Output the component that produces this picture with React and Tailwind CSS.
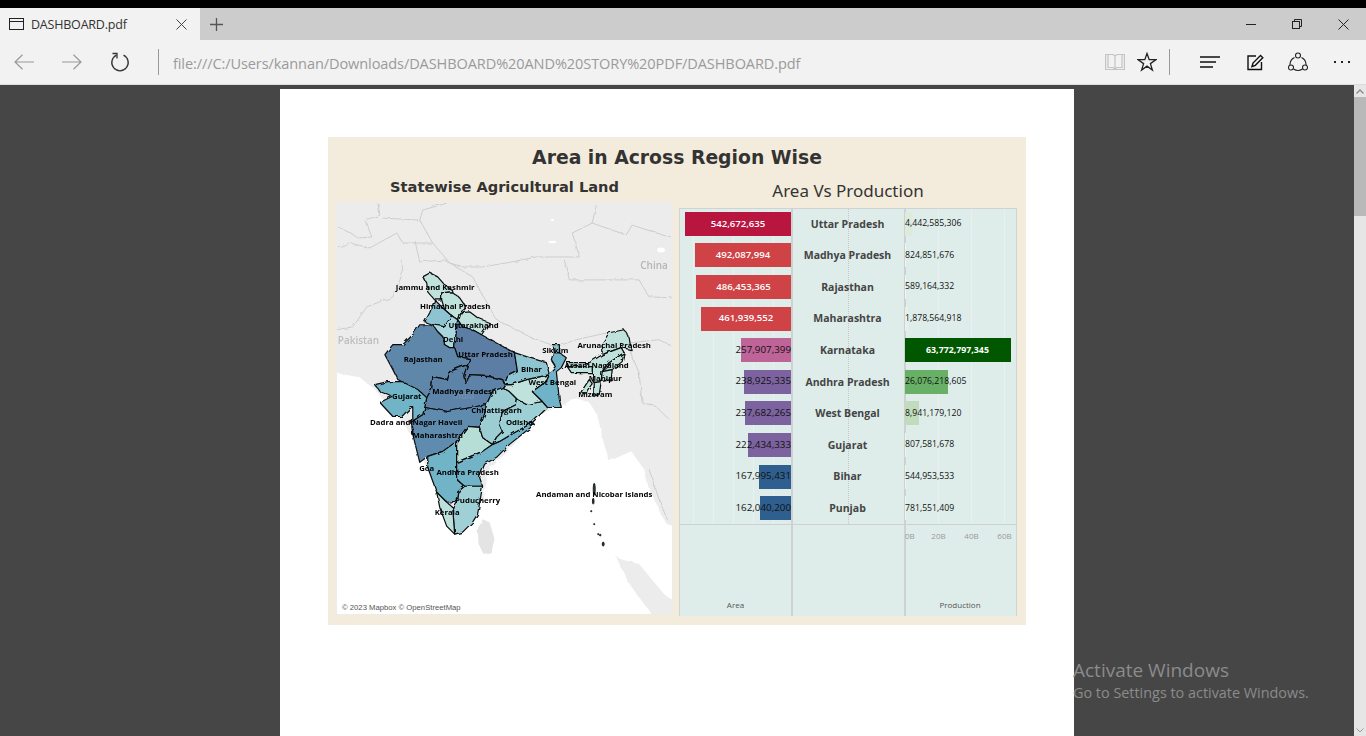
import React from 'react'

const sans = "font-['Open_Sans',sans-serif]"

const rows = [
  { name: 'Uttar Pradesh', area: '542,672,635', areaW: 106, areaBg: 'bg-[#b8163f]', areaIn: true, prod: '4,442,585,306', prodW: 7, prodBg: 'bg-[#dcebdc]' },
  { name: 'Madhya Pradesh', area: '492,087,994', areaW: 96, areaBg: 'bg-[#cf4347]', areaIn: true, prod: '824,851,676', prodW: 1, prodBg: 'bg-[#eef5ee]' },
  { name: 'Rajasthan', area: '486,453,365', areaW: 95, areaBg: 'bg-[#cf4347]', areaIn: true, prod: '589,164,332', prodW: 1, prodBg: 'bg-[#eef5ee]' },
  { name: 'Maharashtra', area: '461,939,552', areaW: 90, areaBg: 'bg-[#cf4347]', areaIn: true, prod: '1,878,564,918', prodW: 3, prodBg: 'bg-[#e8f1e8]' },
  { name: 'Karnataka', area: '257,907,399', areaW: 50, areaBg: 'bg-[#bf6498]', prod: '63,772,797,345', prodW: 106, prodBg: 'bg-[#005700]', prodIn: true },
  { name: 'Andhra Pradesh', area: '238,925,335', areaW: 47, areaBg: 'bg-[#7c63a0]', prod: '26,076,218,605', prodW: 43, prodBg: 'bg-[#67b066]' },
  { name: 'West Bengal', area: '237,682,265', areaW: 46, areaBg: 'bg-[#7c63a0]', prod: '8,941,179,120', prodW: 14, prodBg: 'bg-[#c0dcbc]' },
  { name: 'Gujarat', area: '222,434,333', areaW: 43, areaBg: 'bg-[#7c63a0]', prod: '807,581,678', prodW: 1, prodBg: 'bg-[#eef5ee]' },
  { name: 'Bihar', area: '167,995,431', areaW: 32, areaBg: 'bg-[#2f5f8f]', prod: '544,953,533', prodW: 1, prodBg: 'bg-[#eef5ee]' },
  { name: 'Punjab', area: '162,040,200', areaW: 31, areaBg: 'bg-[#2f5f8f]', prod: '781,551,409', prodW: 1, prodBg: 'bg-[#eef5ee]' },
]

const states = [
  { fill: '#bfe3dc', d: '423,277 430,273 438,277 445,285 452,290 452,292 442,293 442,300 435,300 428,292 427,283' },
  { fill: '#bfe3dc', d: '442,300 442,293 452,292 460,298 467,308 460,313 458,320 452,316 445,310' },
  { fill: '#8ec4d2', d: '435,300 445,310 452,316 445,327 433,325 425,322 430,313' },
  { fill: '#bfe3dc', d: '460,313 470,312 478,318 490,323 482,335 473,330 463,327 458,320' },
  { fill: '#a9d5dc', d: '433,325 445,327 452,316 458,320 455,348 450,348 445,345 443,337 438,332' },
  { fill: '#5c7ea5', d: '458,320 463,327 473,330 482,335 500,345 515,353 518,372 508,377 505,385 503,380 490,377 470,376 466,384 464,376 468,365 470,359 458,357 455,348' },
  { fill: '#5e87aa', d: '425,325 433,325 438,332 443,337 445,345 450,348 455,348 458,357 470,359 468,365 460,368 450,372 448,380 433,377 432,390 427,398 413,388 398,380 392,368 385,355 393,345 403,345 413,335 420,325' },
  { fill: '#5d83a9', d: '432,390 433,377 448,380 450,372 460,368 468,365 464,376 466,384 470,376 490,377 503,380 505,385 503,388 493,392 487,405 472,408 448,412 425,408 427,398' },
  { fill: '#5f8cae', d: '425,408 448,412 472,408 487,405 485,415 480,428 468,427 457,442 443,452 428,457 420,463 413,435 412,422 423,415' },
  { fill: '#72b4c7', d: '375,385 388,382 402,382 418,390 427,398 425,408 423,415 412,422 413,435 413,425 413,407 409,410 402,417 393,417 380,403 392,397 380,392' },
  { fill: '#72b4c7', d: '428,457 443,452 457,442 457,463 457,480 465,487 458,493 457,502 447,503 437,493 428,468' },
  { fill: '#b6ddd6', d: '457,442 468,427 480,428 483,438 493,445 483,452 457,463' },
  { fill: '#72b3c7', d: '457,463 483,452 493,445 500,442 517,432 533,423 535,425 510,445 497,458 485,465 480,478 483,487 465,487 457,480' },
  { fill: '#9fd0d6', d: '457,502 458,493 465,487 483,487 478,515 473,523 463,533 455,535 453,508' },
  { fill: '#bde0db', d: '437,493 447,503 453,508 455,535 447,527 440,508' },
  { fill: '#9ccdd3', d: '493,392 503,388 510,392 518,400 517,405 503,412 500,425 503,432 497,438 493,445 483,438 480,428 485,415 487,405' },
  { fill: '#9dd0d4', d: '518,400 527,405 543,402 548,408 533,423 517,432 500,442 493,445 497,438 503,432 500,425 503,412 517,405' },
  { fill: '#bfe3dc', d: '505,385 512,385 527,380 550,375 547,382 533,392 543,402 527,405 518,400 510,392 503,388' },
  { fill: '#8fc5d1', d: '515,353 530,358 547,363 550,375 527,380 512,385 505,385 508,377 518,372' },
  { fill: '#6fb3c8', d: '554,353 560,353 567,358 562,368 557,372 560,400 562,408 553,408 548,408 543,402 533,392 547,382 550,375 557,368 552,360' },
  { fill: '#8fc5d1', d: '553,345 560,345 560,353 554,353' },
  { fill: '#bfe3dc', d: '603,355 602,345 610,333 625,330 630,338 632,350 622,348' },
  { fill: '#bfe3dc', d: '568,363 590,363 603,355 622,348 625,353 610,363 603,372 602,382 595,383 593,373 593,367 568,367' },
  { fill: '#bfe3dc', d: '568,367 593,367 593,373 572,373' },
  { fill: '#bfe3dc', d: '625,353 623,362 613,370 603,372 610,363' },
  { fill: '#bfe3dc', d: '603,372 613,370 612,380 602,382' },
  { fill: '#bfe3dc', d: '595,383 602,382 600,395 595,397' },
  { fill: '#bfe3dc', d: '590,380 593,384 585,395 582,392' },
]

const islands = [[595, 490, 1, 6], [594, 502, 0.8, 3], [592, 512, 0.6, 0.6], [595, 525, 0.6, 0.6], [599, 535, 0.6, 0.6], [601, 536, 0.8, 0.8], [604, 545, 1, 2]]

const borders = [
  '338,247 350,243 370,248 397,233 403,243 433,243 450,263 463,267 483,267 507,263 537,257 563,257 580,257 573,233 593,223 597,205',
  '593,223 627,235 633,225 673,238',
  '337,226 352,234 358,238 372,237 365,220 380,215 378,203',
  '383,218 420,220 423,210 447,203',
  '420,220 433,243',
  '402,260 403,273 393,297 367,307 353,327 337,330',
  '445,260 473,277 497,320 530,337 557,347 577,340 613,332',
  '565,260 570,280 640,280 650,297 673,298',
  '632,343 660,340 673,347',
  '640,373 643,403 657,407 670,420',
  '630,350 640,373',
  '415,240 420,262 445,260',
  '650,470 660,500 668,520',
]

const labels = [
  ['Jammu and Kashmir', 435.5, 290], ['Himachal Pradesh', 455.5, 309], ['Uttarakhand', 474, 328], ['Delhi', 453.5, 342],
  ['Rajasthan', 423.5, 362], ['Uttar Pradesh', 486, 357], ['Sikkim', 556, 353], ['Arunachal Pradesh', 615, 348],
  ['Assam', 578, 368], ['Nagaland', 611, 368], ['Bihar', 532, 372], ['Manipur', 606, 381], ['West Bengal', 553, 385],
  ['Mizoram', 596, 397], ['Madhya Pradesh', 465, 394], ['Gujarat', 407, 399], ['Chhattisgarh', 497, 414],
  ['Dadra and Nagar Haveli', 416.5, 426], ['Odisha', 520, 426], ['Maharashtra', 438, 439], ['Goa', 427, 472],
  ['Andhra Pradesh', 468, 476], ['Puducherry', 478, 504], ['Kerala', 447.5, 516], ['Andaman and Nicobar Islands', 595, 498],
]

const Line = ({ children, className = 'w-5 h-5', view = '0 0 20 20', stroke = 'currentColor', width = 1 }) => (
  <svg viewBox={view} className={className} fill="none" stroke={stroke} strokeWidth={width}>{children}</svg>
)

const IndiaMap = () => (
  <svg viewBox="337 203 336 412" className="block w-full h-full">
    <defs>
      <filter id="wiggle" x="-5%" y="-5%" width="110%" height="110%">
        <feTurbulence type="fractalNoise" baseFrequency="0.14" numOctaves="2" seed="4" result="n" />
        <feDisplacementMap in="SourceGraphic" in2="n" scale="4" />
        <feGaussianBlur stdDeviation="0.25" />
      </filter>
      <filter id="soft" x="-5%" y="-5%" width="110%" height="110%">
        <feGaussianBlur stdDeviation="0.2" />
      </filter>
    </defs>
    <rect x="337" y="203" width="336" height="412" fill="#ffffff" />
    <g filter="url(#wiggle)">
      <polygon fill="#ececec" points="330,196 680,196 680,530 666,523 660,510 650,490 645,470 632,452 610,462 605,445 598,415 590,403 575,398 565,405 540,415 510,450 490,470 483,500 465,530 440,500 415,440 400,420 375,390 360,378 330,372" />
      <polygon fill="#ececec" points="617,558 640,565 665,595 680,606 680,620 655,618 630,585" />
      <polygon fill="#e4e4e4" points="483,520 490,523 495,540 492,553 484,555 479,545 478,530" />
      {borders.map((b) => <polyline key={b} points={b} fill="none" stroke="#cdcdcd" strokeWidth="1" />)}
    </g>
    <ellipse cx="553" cy="242" rx="4" ry="1.2" fill="#fff" />
    <ellipse cx="662" cy="250" rx="4" ry="2.5" fill="#fff" />
    <ellipse cx="553" cy="220" rx="2" ry="1" fill="#fff" />
    <g filter="url(#soft)">
      <text x="358.5" y="344" textAnchor="middle" fontSize="10" fontWeight="600" fill="#bdbdbd" fontFamily="Open Sans">Pakistan</text>
      <text x="655" y="269" textAnchor="middle" fontSize="10" fontWeight="600" fill="#b5b5b5" fontFamily="Open Sans">China</text>
    </g>
    <g filter="url(#wiggle)">
      {states.map((s) => <polygon key={s.d} points={s.d} fill={s.fill} stroke="#0b0b0b" strokeWidth="1.2" strokeLinejoin="round" />)}
    </g>
    <g filter="url(#soft)">
      {islands.map(([x, y, rx, ry]) => <ellipse key={y} cx={x} cy={y} rx={rx} ry={ry} fill="#33494b" stroke="#000" strokeWidth="0.8" />)}
      <text x="464" y="399" textAnchor="middle" fontSize="9" fontWeight="600" fill="#7390ae" fontFamily="Open Sans">India</text>
      {labels.map(([t, x, y]) => (
        <text key={t} x={x} y={y} textAnchor="middle" fontSize="7.8" fontWeight="700" fill="#000" fontFamily="Open Sans">{t}</text>
      ))}
    </g>
  </svg>
)

const Chart = () => (
  <div className="relative w-[338px] h-[408px] bg-[#dfedea] border border-[#cfd3d3] border-b-0 flex flex-col">
    {[13, 33, 53, 73, 93, 258, 291, 324].map((x) => (
      <div key={x} className="absolute top-0 h-[315px] w-px bg-[#e9f0ef]" style={{ left: x }} />
    ))}
    <div className="absolute top-0 left-[168px] h-[315px] border-l border-dotted border-[#c6c6c6]" />
    <div className="absolute top-0 left-[111px] bottom-0 w-[1.5px] bg-[#cdd1d1]" />
    <div className="absolute top-0 left-[224px] bottom-0 w-[1.5px] bg-[#cdd1d1]" />
    <div className={`relative h-[316px] -mt-px flex flex-col ${sans}`}>
      {rows.map((r) => (
        <div key={r.name} className="h-[31.6px] grid grid-cols-[111px_113px_112px] items-center">
          <div className="relative h-[24px] flex justify-end">
            <div className={`h-full ${r.areaBg}`} style={{ width: r.areaW }} />
            {r.areaIn ? (
              <span className="absolute right-0 top-0 h-full flex items-center justify-center text-[9.6px] font-semibold text-white" style={{ width: r.areaW }}>{r.area}</span>
            ) : (
              <span className="absolute right-0 top-0 h-full flex items-center text-[9.8px] text-[#111]">{r.area}</span>
            )}
          </div>
          <div className="text-center text-[10.5px] font-bold text-[#444] leading-none">{r.name}</div>
          <div className="relative h-[24px] pl-[1px]">
            <div className={`h-full ${r.prodBg}`} style={{ width: r.prodW }} />
            {r.prodIn ? (
              <span className="absolute left-0 top-0 h-full w-[107px] flex items-center justify-center text-[8.8px] font-bold text-white">{r.prod}</span>
            ) : (
              <span className="absolute left-[1px] top-0 h-full flex items-center text-[8.7px] text-[#111] whitespace-nowrap">{r.prod}</span>
            )}
          </div>
        </div>
      ))}
    </div>
    <div className={`relative flex-1 border-t border-[#cdd1d1] grid grid-cols-[111px_113px_112px] ${sans}`}>
      <div className="flex items-end justify-center pb-[5px] text-[8px] text-[#555] leading-[12px]">Area</div>
      <div />
      <div className="flex flex-col justify-between pb-[5px]">
        <div className="flex pl-[1px] pt-[5px] text-[8px] text-[#999] leading-[12px]">
          <span className="w-[17px] shrink-0">0B</span>
          <span className="w-[33px] shrink-0 text-center">20B</span>
          <span className="w-[33px] shrink-0 text-center">40B</span>
          <span className="w-[33px] shrink-0 text-center">60B</span>
        </div>
        <div className="text-center text-[8px] text-[#555] leading-[12px]">Production</div>
      </div>
    </div>
  </div>
)

const App = () => {
  return (
    <div className={`relative w-[1366px] h-[736px] overflow-hidden flex flex-col bg-[#464646] ${sans}`}>
      <div className="h-2 bg-black" />

      <div className="h-8 bg-[#cccccc] flex items-center text-[#222]">
        <div className="w-[200px] h-full bg-[#f2f2f2] flex items-center">
          <Line className="ml-[9px] w-[15px] h-[12px]" view="0 0 15 12" stroke="#222">
            <rect x="0.5" y="0.5" width="14" height="11" />
            <path d="M0.5 3.5H14.5" />
          </Line>
          <span className="ml-[7px] pt-[3px] text-[12.5px] tracking-[-0.2px] text-[#333]">DASHBOARD.pdf</span>
          <Line className="ml-auto mr-[13px] w-[11px] h-[11px]" view="0 0 11 11" stroke="#444">
            <path d="M0.5 0.5L10.5 10.5M10.5 0.5L0.5 10.5" />
          </Line>
        </div>
        <Line className="ml-[10px] w-[13px] h-[13px]" view="0 0 13 13" stroke="#555" width={1.3}>
          <path d="M6.5 0V13M0 6.5H13" />
        </Line>
        <div className="ml-auto flex items-center">
          <div className="w-[46px] flex justify-center">
            <div className="w-[10px] h-px bg-[#222]" />
          </div>
          <div className="w-[46px] flex justify-center">
            <Line className="w-[10px] h-[10px]" view="0 0 10 10" stroke="#222">
              <rect x="0.5" y="2.5" width="7" height="7" />
              <path d="M2.5 2.5V0.5H9.5V7.5H7.5" />
            </Line>
          </div>
          <div className="w-[46px] flex justify-center">
            <Line className="w-[11px] h-[11px]" view="0 0 11 11" stroke="#222">
              <path d="M0.5 0.5L10.5 10.5M10.5 0.5L0.5 10.5" />
            </Line>
          </div>
        </div>
      </div>

      <div className="h-[45px] bg-[#f2f2f2] border-b border-[#dcdcdc] flex items-center">
        <div className="w-[48px] flex justify-center">
          <Line className="w-5 h-4" view="0 0 20 16" stroke="#9a9a9a" width={1.2}>
            <path d="M20 8H1M8.5 0.7L1 8L8.5 15.3" />
          </Line>
        </div>
        <div className="w-[48px] flex justify-center">
          <Line className="w-5 h-4" view="0 0 20 16" stroke="#9a9a9a" width={1.2}>
            <path d="M0 8H19M11.5 0.7L19 8L11.5 15.3" />
          </Line>
        </div>
        <div className="w-[48px] flex justify-center">
          <Line className="w-5 h-5" stroke="#333" width={1.3}>
            <path d="M6.5 3.2A8.2 8.2 0 1 0 13.5 3.2" />
            <path d="M2.5 1.5H7V6.5" />
          </Line>
        </div>
        <div className="ml-[14px] w-px h-[26px] bg-[#9a9a9a]" />
        <div className="ml-[14px] flex-1 pt-[3px] text-[14.55px] tracking-[-0.1px] text-[#9a9a9a] whitespace-nowrap">
          file:///C:/Users/kannan/Downloads/DASHBOARD%20AND%20STORY%20PDF/DASHBOARD.pdf
        </div>
        <div className="flex items-center">
          <div className="w-[32px] flex justify-center">
            <Line className="w-5 h-[18px]" view="0 0 20 18" stroke="#c4c4c4" width={1.2}>
              <path d="M0.6 1.5H8L10 3L12 1.5H19.4V16.5H0.6Z" />
              <path d="M10 3V16.5M3 1.5V14.5H8L10 16M17 1.5V14.5H12L10 16" />
            </Line>
          </div>
          <div className="w-[32px] flex justify-center">
            <Line className="w-5 h-5" stroke="#222" width={1.3}>
              <path d="M10 1.5L12.2 7.7H18.8L13.4 11.6L15.4 18L10 14.1L4.6 18L6.6 11.6L1.2 7.7H7.8Z" />
            </Line>
          </div>
          <div className="ml-[6px] mr-[18px] w-px h-[26px] bg-[#9a9a9a]" />
          <div className="w-[44px] flex justify-center">
            <Line className="w-5 h-[12px]" view="0 0 20 12" stroke="#111" width={1.3}>
              <path d="M0 1H20M0 6H16M0 11H13" />
            </Line>
          </div>
          <div className="w-[46px] flex justify-center">
            <Line className="w-[17px] h-[17px]" view="0 0 17 17" stroke="#111" width={1.4}>
              <path d="M14.5 8V15.5H1V2H9" />
              <path d="M5 12.5L6 9L13.5 1.5L15.8 3.8L8.3 11.3Z" />
            </Line>
          </div>
          <div className="w-[40px] flex justify-center">
            <Line className="w-5 h-5" stroke="#222" width={1.1}>
              <circle cx="10" cy="3.5" r="2.5" />
              <circle cx="3" cy="15.5" r="2.5" />
              <circle cx="17" cy="15.5" r="2.5" />
              <path d="M6.5 5.5A8 8 0 0 0 2 13M13.5 5.5A8 8 0 0 1 18 13M5.5 17A8 8 0 0 0 14.5 17" />
            </Line>
          </div>
          <div className="w-[48px] flex justify-center gap-[5px]">
            <div className="w-[2px] h-[2px] bg-[#222]" />
            <div className="w-[2px] h-[2px] bg-[#222]" />
            <div className="w-[2px] h-[2px] bg-[#222]" />
          </div>
        </div>
      </div>

      <div className="flex-1 min-h-0 flex">
        <div className="flex-1 overflow-hidden pt-[4px] pl-[280px]">
          <div className="w-[794px] h-[700px] bg-white pt-[48px] pl-[48px]">
            <div className="w-[698px] h-[488px] bg-[#f3ecdc] flex flex-col">
              <h1 className="mt-[8px] h-[26px] text-center text-[18.8px] leading-[26px] font-bold text-[#333] font-['DejaVu_Sans',sans-serif]">Area in Across Region Wise</h1>
              <div className="flex-1 flex pl-[8px]">
                <div className="w-[337px] flex flex-col">
                  <h2 className="mt-[7px] mb-[7px] h-[17px] text-center text-[14.6px] leading-[17px] font-bold text-[#333] font-['DejaVu_Sans',sans-serif]">Statewise Agricultural Land</h2>
                  <div className="relative w-[337px] h-[413px] border border-[#ececec]">
                    <IndiaMap />
                    <div className="absolute left-0 bottom-0 px-[5px] h-[13px] flex items-center bg-white/70 text-[7.7px] text-[#555] font-['Liberation_Sans',sans-serif]">© 2023 Mapbox © OpenStreetMap</div>
                  </div>
                </div>
                <div className="ml-[6px] w-[338px] flex flex-col">
                  <h2 className="mt-[9px] mb-[6px] h-[22px] text-center text-[17px] leading-[22px] text-[#333] font-['Noto_Sans',sans-serif]">Area Vs Production</h2>
                  <Chart />
                </div>
              </div>
            </div>
          </div>
        </div>
        <div className="w-[12px] bg-[#e6e6e6] flex flex-col">
          <div className="h-[12px] flex items-center justify-center">
            <Line className="w-[8px] h-[5px]" view="0 0 8 5" stroke="#888" width={1.3}>
              <path d="M0.5 4.5L4 1L7.5 4.5" />
            </Line>
          </div>
          <div className="h-[119px] bg-[#b9b9b9]" />
          <div className="mt-auto h-[12px] flex items-center justify-center">
            <Line className="w-[8px] h-[5px]" view="0 0 8 5" stroke="#999" width={1}>
              <path d="M0.5 0.5L4 4L7.5 0.5" />
            </Line>
          </div>
        </div>
      </div>

      <div className="absolute left-[1073px] top-[657px] text-[#8b8b8b] leading-none pointer-events-none">
        <div className="text-[19px] leading-[26px]">Activate Windows</div>
        <div className="text-[14.4px] leading-[20px]">Go to Settings to activate Windows.</div>
      </div>
    </div>
  )
}

export default App
